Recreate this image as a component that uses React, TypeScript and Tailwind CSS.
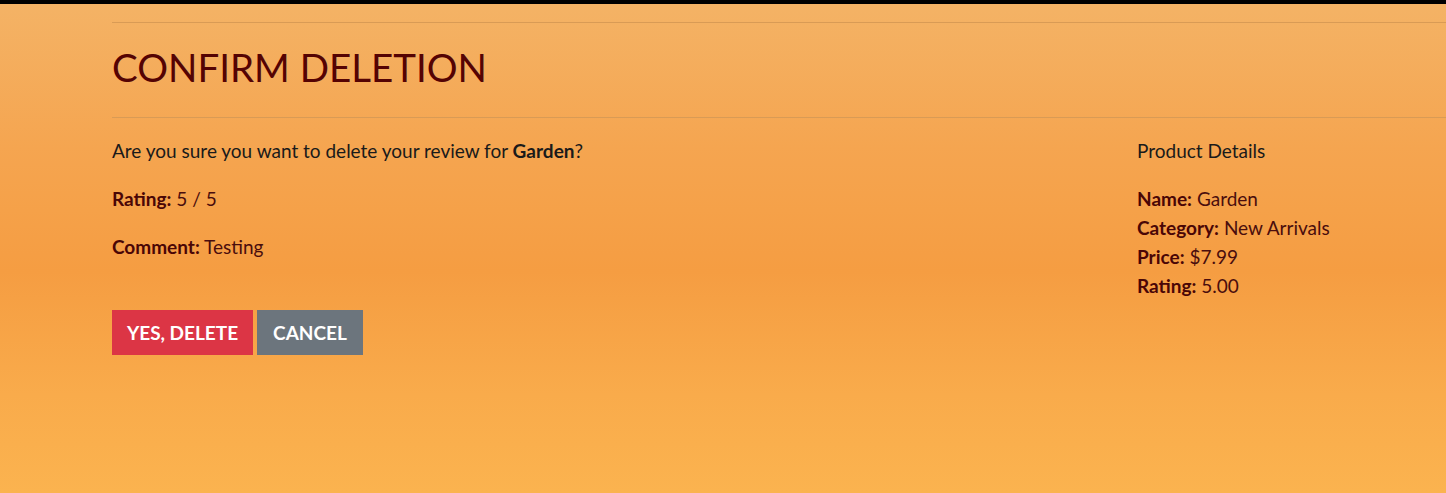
import React from 'react';

const details = [
  { label: 'Name:', value: 'Garden' },
  { label: 'Category:', value: 'New Arrivals' },
  { label: 'Price:', value: '$7.99' },
  { label: 'Rating:', value: '5.00' },
];

const App = () => {
  return (
    <div
      className="min-h-[493px] bg-[linear-gradient(180deg,#f4b366_0%,#f5a550_30%,#f59d42_55%,#f9ab4b_80%,#fbb34f_100%)] text-[19px] leading-[29px] text-[#1a1a1a]"
      style={{ fontFamily: 'Lato, "Noto Sans", sans-serif' }}
    >
      <div className="h-1 bg-black" />

      <div className="pl-[112px] pt-[18px]">
        <div className="border-t border-b border-[#d99b55] pt-[22px] pb-[28px]">
          <h1 className="text-[38.5px] leading-[44px] font-normal text-[#550303]">CONFIRM DELETION</h1>
        </div>

        <div className="grid grid-cols-[1025px_1fr] pt-[18px] pb-[120px]">
          <div>
            <p className="mb-[19px]">
              Are you sure you want to delete your review for <strong className="font-bold">Garden</strong>?
            </p>
            <p className="mb-[19px] text-[#4a0d0d]">
              <strong className="font-bold text-[#4a0606]">Rating:</strong> 5 / 5
            </p>
            <p className="mb-[19px] text-[#4a0d0d]">
              <strong className="font-bold text-[#4a0606]">Comment:</strong> Testing
            </p>

            <div className="mt-[49px] flex gap-1">
              <button className="h-[45px] w-[141px] bg-[#dc3545] font-bold text-white uppercase">Yes, Delete</button>
              <button className="h-[45px] w-[106px] bg-[#6c757d] font-bold text-white uppercase">Cancel</button>
            </div>
          </div>

          <div>
            <p className="mb-[19px]">Product Details</p>
            <div className="text-[#4a0d0d]">
              {details.map((d) => (
                <div key={d.label}>
                  <strong className="font-bold text-[#4a0606]">{d.label}</strong> {d.value}
                </div>
              ))}
            </div>
          </div>
        </div>
      </div>
    </div>
  );
};

export default App;
